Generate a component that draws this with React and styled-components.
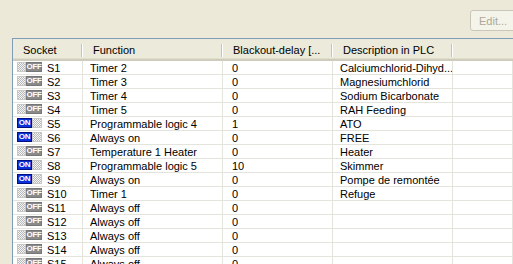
import styled, { createGlobalStyle } from 'styled-components'

const GlobalStyle = createGlobalStyle`
  body {
    margin: 0;
    font-family: "Liberation Sans", Arial, sans-serif;
    font-size: 11px;
  }
`

const sockets = [
  { on: false, fn: 'Timer 2', delay: '0', desc: 'Calciumchlorid-Dihyd...' },
  { on: false, fn: 'Timer 3', delay: '0', desc: 'Magnesiumchlorid' },
  { on: false, fn: 'Timer 4', delay: '0', desc: 'Sodium Bicarbonate' },
  { on: false, fn: 'Timer 5', delay: '0', desc: 'RAH Feeding' },
  { on: true, fn: 'Programmable logic 4', delay: '1', desc: 'ATO' },
  { on: true, fn: 'Always on', delay: '0', desc: 'FREE' },
  { on: false, fn: 'Temperature 1 Heater', delay: '0', desc: 'Heater' },
  { on: true, fn: 'Programmable logic 5', delay: '10', desc: 'Skimmer' },
  { on: true, fn: 'Always on', delay: '0', desc: 'Pompe de remontée' },
  { on: false, fn: 'Timer 1', delay: '0', desc: 'Refuge' },
  { on: false, fn: 'Always off', delay: '0', desc: '' },
  { on: false, fn: 'Always off', delay: '0', desc: '' },
  { on: false, fn: 'Always off', delay: '0', desc: '' },
  { on: false, fn: 'Always off', delay: '0', desc: '' },
  { on: false, fn: 'Always off', delay: '0', desc: '' },
]

const columns = '70px 140px 110px 120px 1fr'

const Page = styled.div`
  width: 513px;
  height: 264px;
  overflow: hidden;
  background: #ece9d8;
`

const Toolbar = styled.div`
  height: 38px;
  display: flex;
  justify-content: flex-end;
  align-items: flex-start;
`

const Button = styled.button`
  margin-top: 10px;
  margin-right: -32px;
  width: 75px;
  height: 21px;
  padding: 0 0 0 8px;
  text-align: left;
  font: inherit;
  color: #aca899;
  background: #f5f4ea;
  border: 1px solid #c9c7ba;
  border-radius: 3px;
`

const ListView = styled.div`
  margin-left: 12px;
  border-left: 1px solid #7f9db9;
  border-top: 1px solid #7f9db9;
  background: #fff;
  height: 100%;
`

const Header = styled.div`
  display: grid;
  grid-template-columns: ${columns};
  height: 19px;
  padding-top: 1px;
  background: #ebeadb;
  border-bottom: 2px solid #d0ccbc;
  box-shadow: inset 0 -1px 0 #e2decd;
`

const HeaderCell = styled.div`
  display: flex;
  align-items: center;
  padding-left: 10px;
  position: relative;
  color: #000;
  white-space: nowrap;

  &::after {
    content: '';
    position: absolute;
    right: 1px;
    top: 4px;
    height: 13px;
    width: 1px;
    background: #c7c5b2;
    box-shadow: 1px 0 0 #fff;
    display: ${p => (p.$last ? 'none' : 'block')};
  }
`

const Row = styled.div`
  display: grid;
  grid-template-columns: ${columns};
  height: 14px;
`

const Cell = styled.div`
  display: flex;
  align-items: center;
  gap: 5px;
  padding-left: ${p => p.$pad ?? 7}px;
  border-right: 1px solid #e4e3dc;
  border-bottom: 1px solid #e4e3dc;
  white-space: nowrap;
  overflow: hidden;
  color: #000;
`

const checker = 'repeating-conic-gradient(#b8b8b8 0 25%, #f4f4f4 0 50%) 0 0 / 2px 2px'

const Toggle = styled.span`
  display: flex;
  width: 25px;
  height: 10px;
  margin-top: -2px;
  flex: none;
`

const Part = styled.span`
  display: flex;
  align-items: center;
  justify-content: center;
  font: bold 8px "Liberation Sans", Arial, sans-serif;
  letter-spacing: -0.3px;
  color: #fff;
  box-sizing: border-box;
`

const Lit = styled(Part)`
  width: 15px;
  background: #0a30d8;
  border: 1px solid #001080;
`

const Dark = styled(Part)`
  width: 16px;
  background: #8a8a8a;
  border: 1px solid #777;
`

const Pattern = styled.span`
  flex: 1;
  background: ${checker};
  border: 1px solid #c8c8c8;
`

const Switch = ({ on }) =>
  on
    ? <Toggle><Lit>ON</Lit><Pattern /></Toggle>
    : <Toggle><Pattern /><Dark>OFF</Dark></Toggle>

export default function App () {
  return (
    <Page>
      <GlobalStyle />
      <Toolbar>
        <Button disabled>Edit...</Button>
      </Toolbar>
      <ListView>
        <Header>
          <HeaderCell>Socket</HeaderCell>
          <HeaderCell>Function</HeaderCell>
          <HeaderCell>Blackout-delay [...</HeaderCell>
          <HeaderCell>Description in PLC</HeaderCell>
          <HeaderCell $last />
        </Header>
        {sockets.map((s, i) => (
          <Row key={i}>
            <Cell $pad={4}><Switch on={s.on} />S{i + 1}</Cell>
            <Cell>{s.fn}</Cell>
            <Cell $pad={9}>{s.delay}</Cell>
            <Cell>{s.desc}</Cell>
            <Cell />
          </Row>
        ))}
      </ListView>
    </Page>
  )
}
